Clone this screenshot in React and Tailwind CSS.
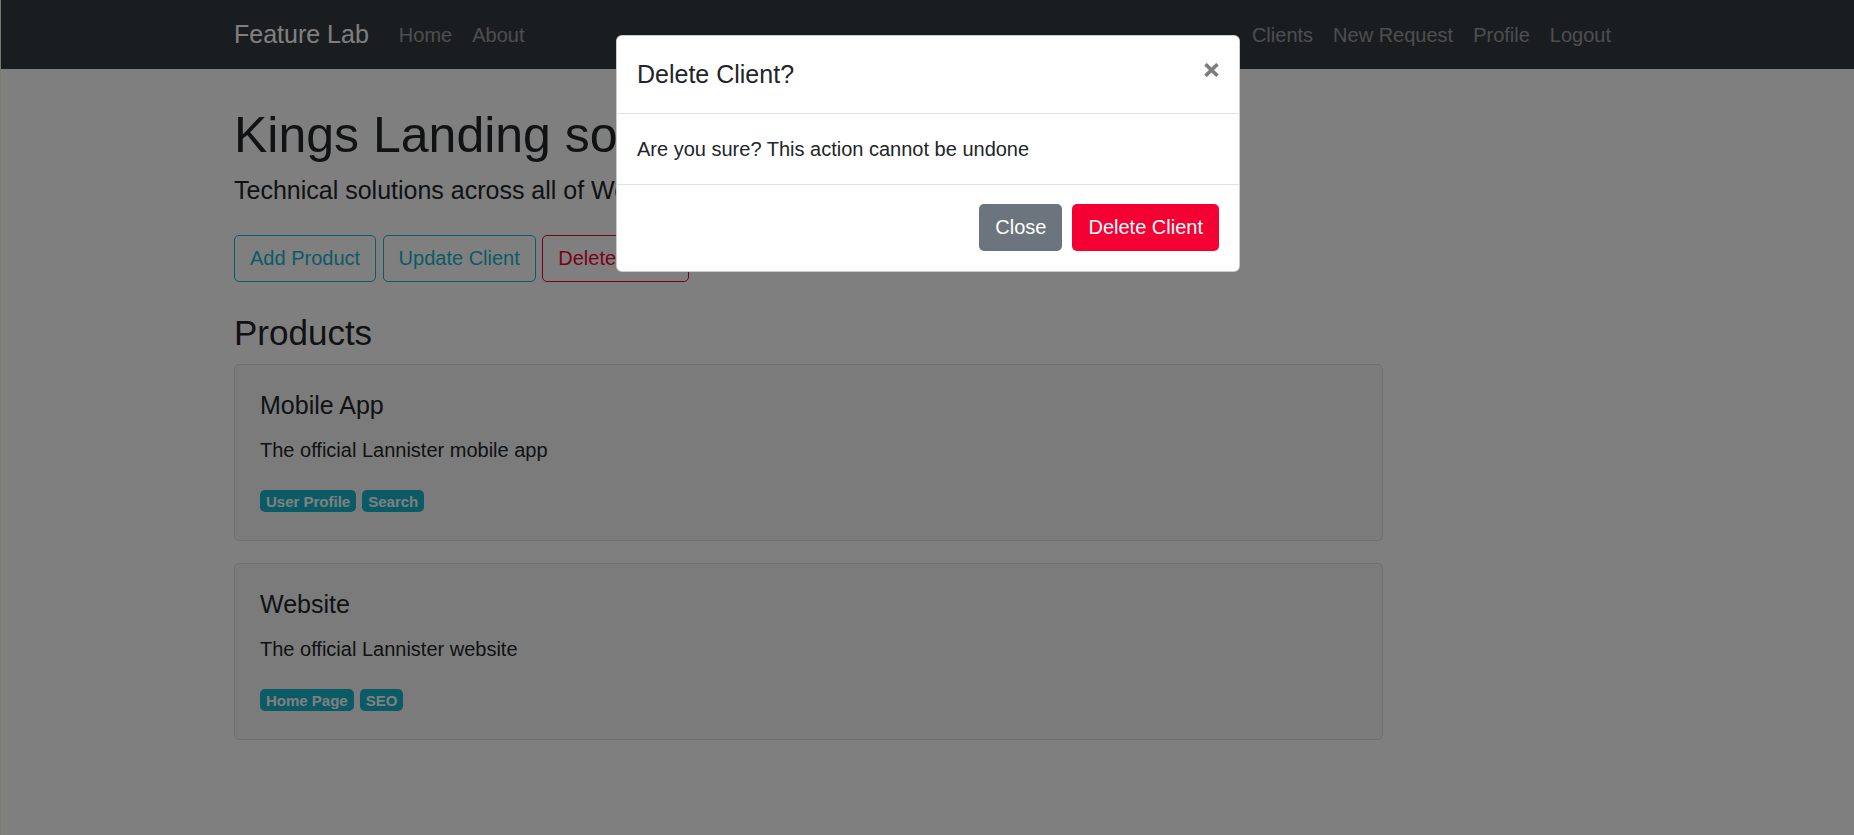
import React from 'react';

const font = { fontFamily: '"Liberation Sans", Arial, sans-serif' };

const products = [
  { name: 'Mobile App', description: 'The official Lannister mobile app', features: ['User Profile', 'Search'] },
  { name: 'Website', description: 'The official Lannister website', features: ['Home Page', 'SEO'] },
];

function Navbar() {
  return (
    <nav className="h-[69px] bg-[#343a40]">
      <div className="mx-auto flex h-full w-[1387px] items-center justify-between">
        <div className="flex items-center">
          <a className="mr-[20px] text-[25px] leading-[37.5px] text-white">Feature Lab</a>
          <a className="px-[10px] text-[20px] leading-[30px] text-white/50">Home</a>
          <a className="px-[10px] text-[20px] leading-[30px] text-white/50">About</a>
        </div>
        <div className="flex items-center">
          {['Clients', 'New Request', 'Profile', 'Logout'].map((l) => (
            <a key={l} className="px-[10px] text-[20px] leading-[30px] text-white/50">{l}</a>
          ))}
        </div>
      </div>
    </nav>
  );
}

function ProductCard({ product }) {
  return (
    <div className="rounded-[5px] border border-[#dfdfdf] bg-[#f7f7f7] px-[25px] pt-[25.3px] pb-[27.3px]">
      <h5 className="text-[25px] leading-[30px] text-[#212529]">{product.name}</h5>
      <p className="mt-[15px] text-[20px] leading-[30px] text-[#212529]">{product.description}</p>
      <div className="mt-[25.6px] flex gap-[6px]">
        {product.features.map((f) => (
          <span key={f} className="rounded-[5px] bg-[#15b6cd] px-[6px] py-[3.4px] text-[15px] font-bold leading-[15px] text-white">
            {f}
          </span>
        ))}
      </div>
    </div>
  );
}

function DeleteModal() {
  return (
    <div className="absolute left-[615px] top-[35px] w-[624px] rounded-[6px] border border-black/20 bg-white">
      {/* Header */}
      <div className="flex h-[77.5px] items-start justify-between border-b border-[#dee2e6] px-[20px] pt-[20px]">
        <h5 className="text-[25px] leading-[37.5px] text-[#212529]">Delete Client?</h5>
        <button className="mt-[7.3px] text-[#7d7d7d]" title="Close">
          <svg width="15" height="14" viewBox="0 0 15 14">
            <path d="M1.5 1.2L13.5 12.8M13.5 1.2L1.5 12.8" stroke="currentColor" strokeWidth="3.6" />
          </svg>
        </button>
      </div>
      {/* Body */}
      <div className="border-b border-[#dee2e6] p-[20px]">
        <p className="text-[20px] leading-[30px] text-[#212529]">Are you sure? This action cannot be undone</p>
      </div>
      {/* Footer */}
      <div className="flex justify-end gap-[10px] px-[20px] pt-[19.5px] pb-[20.5px]">
        <button className="h-[46.5px] rounded-[5px] bg-[#6c757d] px-[16px] text-[20px] text-white">Close</button>
        <button className="h-[46.5px] rounded-[5px] bg-[#f50033] px-[16px] text-[20px] text-white">Delete Client</button>
      </div>
    </div>
  );
}

export default function App() {
  return (
    <div className="relative h-[835px] w-full overflow-hidden border-l border-[#767c6e] bg-white" style={font}>
      <Navbar />

      <main className="mx-auto w-[1387px] pt-[36px]">
        <h1 className="text-[50px] leading-[60px] text-[#212529]">Kings Landing solutions</h1>
        <p className="mt-[6.6px] text-[25px] leading-[37.5px] text-[#212529]">Technical solutions across all of Westeros</p>

        <div className="mt-[26px] flex gap-[6.5px]">
          <button className="h-[46.5px] rounded-[5px] border border-[#15b6cd] px-[15px] text-[20px] text-[#15b6cd]">Add Product</button>
          <button className="h-[46.5px] rounded-[5px] border border-[#15b6cd] px-[15px] text-[20px] text-[#15b6cd]">Update Client</button>
          <button className="h-[46.5px] rounded-[5px] border border-[#f50033] px-[15px] text-[20px] text-[#f50033]">Delete Client</button>
        </div>

        <h3 className="mt-[30px] text-[35px] leading-[42px] text-[#212529]">Products</h3>

        <div className="mt-[10px] flex w-[1149px] flex-col gap-[22px]">
          {products.map((p) => (
            <ProductCard key={p.name} product={p} />
          ))}
        </div>
      </main>

      {/* backdrop */}
      <div className="absolute inset-0 bg-black/50" />
      <DeleteModal />
    </div>
  );
}
